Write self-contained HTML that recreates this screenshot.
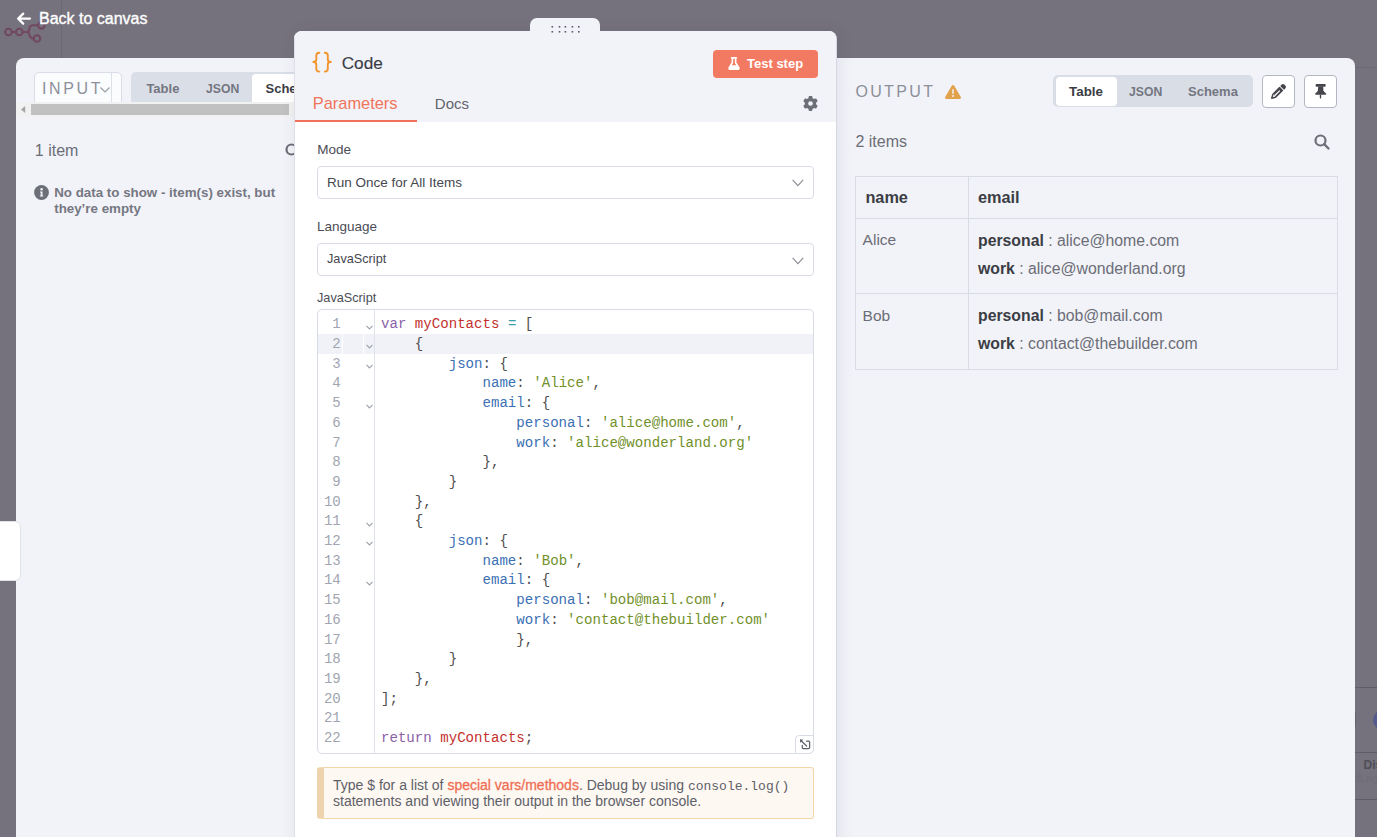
<!DOCTYPE html>
<html><head><meta charset="utf-8">
<style>
*{box-sizing:border-box;margin:0;padding:0}
html,body{width:1377px;height:837px;overflow:hidden}
body{background:#75727d;font-family:"Liberation Sans",sans-serif;position:relative;color:#555}
.a{position:absolute}
.t{position:absolute;white-space:pre;line-height:1}
.b{font-weight:700}
svg{position:absolute;overflow:visible}
/* panels */
#lp{left:16px;top:58px;width:290px;height:800px;background:#f2f3f8;border-radius:8px 0 0 0;overflow:hidden;z-index:1}
#rp{left:830px;top:58px;width:525px;height:800px;background:#f2f3f8;border-radius:0 8px 0 0;overflow:hidden;z-index:1}
#handle{left:530px;top:17.6px;width:70px;height:20px;background:#f2f3f8;border-radius:7px 7px 0 0;z-index:4}
#cp{left:294px;top:31px;width:543px;height:820px;background:#fff;border-radius:8px 8px 0 0;overflow:hidden;border-right:1px solid #d5d8e2;z-index:3;box-shadow:2px 0 16px rgba(60,60,100,.09)}
#cphead{left:0;top:0;width:543px;height:91px;background:#f2f3f8}
.code{font-family:"Liberation Mono",monospace;font-size:14.1px;line-height:19.7px;white-space:pre;color:#4e4e4e}
.kw{color:#8a5fa8}.vd{color:#c2302d}.op{color:#3a9fa8}.pr{color:#3b70b3}.st{color:#71902a}
.ln{font-family:"Liberation Mono",monospace;font-size:14px;line-height:19.7px;color:#a1a5b0;text-align:right;white-space:pre}
</style></head><body>

<!-- canvas background bits -->
<div class="a" style="left:61px;top:0;width:1px;height:58px;background:#6a6873"></div>
<svg style="left:0;top:0" width="60" height="50" viewBox="0 0 60 50">
  <g fill="none" stroke="#724860" stroke-width="2.1">
    <circle cx="8.5" cy="32" r="3.3"/><circle cx="19.3" cy="32" r="3.3"/>
    <circle cx="41.4" cy="25.3" r="3.3"/><circle cx="37" cy="38.5" r="3.3"/>
    <path d="M11.8 32H16M22.6 32H27.5C28.6 32 29 31 29.2 29.5C29.5 27 30.5 25.3 33 25.3H38.1M27.5 32C28.6 32 29 33 29.3 34.5C29.7 36.8 30.6 38.5 33.7 38.5"/>
  </g>
</svg>
<svg style="left:16px;top:12px" width="16" height="16" viewBox="0 0 16 16"><path d="M7.2 1.6L2.2 6.6L7.2 11.6M2.4 6.6H14" fill="none" stroke="#fff" stroke-width="2.3" stroke-linecap="round" stroke-linejoin="round"/></svg>
<div class="t" style="left:39px;top:10.5px;font-size:16px;color:#fff;-webkit-text-stroke:0.35px #fff">Back to canvas</div>

<!-- left white tab -->
<div class="a" style="left:-6px;top:521px;width:27px;height:60px;background:#fff;border:1px solid #dfe1e8;border-radius:6px;z-index:2"></div>

<!-- bottom-right canvas node remnants -->
<div class="a" style="left:1355px;top:58px;width:22px;height:779px;background-image:radial-gradient(circle at center,rgba(40,36,50,.06) 0,rgba(40,36,50,.04) 0.7px,transparent 1.1px);background-size:13.28px 13.28px;background-position:9.24px 5.08px"></div>
<div class="a" style="left:1355px;top:67px;width:22px;height:1px;background:#6c6974"></div>
<div class="a" style="left:1355px;top:687px;width:22px;height:1px;background:#5f5d68"></div>
<div class="a" style="left:1355px;top:752px;width:22px;height:1px;background:#5f5d68"></div>
<div class="a" style="left:1355px;top:799px;width:22px;height:1px;background:#5f5d68"></div>
<div class="a" style="left:1355px;top:712px;width:1px;height:15px;background:#65636e"></div>
<div class="a" style="left:1373px;top:709.5px;width:20px;height:20px;background:#555a8c;border-radius:50%"></div>
<div class="t b" style="left:1363.5px;top:759px;font-size:12px;color:#504d59">Dis</div>
<div class="t" style="left:1354px;top:772.5px;font-size:11px;color:#6e6c77">dLega</div>

<!-- LEFT PANEL -->
<div class="a" id="lp">
  <!-- INPUT select -->
  <div class="a" style="left:18px;top:14px;width:87.5px;height:40px;background:#fbfcfe;border:1px solid #d9dde6;border-radius:5px"></div>
  <div class="a" style="left:95px;top:15px;width:1px;height:40px;background:#dde1ea"></div>
  <div class="t" style="left:26px;top:22.9px;font-size:16px;letter-spacing:2.6px;color:#8e909a">INPUT</div>
  <svg style="left:84px;top:29px" width="10" height="6" viewBox="0 0 10 6"><path d="M0.5 0.5L5 5L9.5 0.5" fill="none" stroke="#9a9ca5" stroke-width="1.1"/></svg>
  <!-- segmented -->
  <div class="a" style="left:115px;top:14.3px;width:200px;height:40px;background:#dadee7;border-radius:5px"></div>
  <div class="a" style="left:236px;top:16.4px;width:80px;height:40px;background:#fff;border-radius:4px"></div>
  <div class="t b" style="left:130.4px;top:23.9px;font-size:13px;color:#747681">Table</div>
  <div class="t b" style="left:190px;top:24.6px;font-size:12.2px;color:#747681">JSON</div>
  <div class="t b" style="left:249.5px;top:23.9px;font-size:13px;color:#3b3d45">Schema</div>
  <!-- scrollbar -->
  <div class="a" style="left:0;top:44px;width:290px;height:14.5px;background:#f1f1f1"></div>
  <svg style="left:4.8px;top:47.9px" width="4.2" height="7" viewBox="0 0 4.2 7"><path d="M4.2 0V7L0 3.5Z" fill="#a3a3a3"/></svg>
  <div class="a" style="left:15px;top:46px;width:258px;height:11px;background:#c1c1c1"></div>
  <!-- 1 item -->
  <div class="t" style="left:18.8px;top:84.5px;font-size:16px;color:#6b6d77">1 item</div>
  <svg style="left:268.5px;top:85px" width="16" height="16" viewBox="0 0 16 16"><circle cx="6.5" cy="6.5" r="5" fill="none" stroke="#6c6e78" stroke-width="2.2"/><path d="M10.2 10.2L14.5 14.5" stroke="#6c6e78" stroke-width="2.4" stroke-linecap="round"/></svg>
  <!-- info -->
  <svg style="left:18.2px;top:127px" width="15" height="15" viewBox="0 0 15 15"><circle cx="7.5" cy="7.5" r="7.4" fill="#6c6e78"/><circle cx="7.6" cy="4.3" r="1.2" fill="#f2f3f8"/><path d="M6 6.6H8.5V10.6H9.3V11.6H5.9V10.6H6.7V7.6H6Z" fill="#f2f3f8"/></svg>
  <div class="t b" style="left:38.2px;top:127.7px;font-size:13.35px;color:#757782">No data to show - item(s) exist, but</div>
  <div class="t b" style="left:38.2px;top:143.7px;font-size:13.35px;color:#757782">they’re empty</div>
</div>

<!-- RIGHT PANEL -->
<div class="a" id="rp">
  <div class="t" style="left:25.4px;top:26.3px;font-size:16px;letter-spacing:2.35px;color:#8d8f99">OUTPUT</div>
  <svg style="left:115px;top:27px" width="16" height="14" viewBox="0 0 512 448"><path fill="#e2a14b" d="M256 0c14.2 0 27.3 7.5 34.5 19.8l216 368c7.3 12.4 7.3 27.7 .2 40.1S486.3 448 472 448H40c-14.3 0-27.6-7.7-34.7-20.1s-7-27.8 .2-40.1l216-368C228.7 7.5 241.8 0 256 0zm0 128c-13.3 0-24 10.7-24 24V264c0 13.3 10.7 24 24 24s24-10.7 24-24V152c0-13.3-10.7-24-24-24zm32 224a32 32 0 1 0 -64 0 32 32 0 1 0 64 0z"/></svg>
  <!-- segmented -->
  <div class="a" style="left:223px;top:17.3px;width:200px;height:32px;background:#d9dde6;border-radius:5px"></div>
  <div class="a" style="left:226px;top:19.2px;width:61px;height:28.5px;background:#fff;border-radius:4px"></div>
  <div class="t b" style="left:239px;top:26.6px;font-size:13.4px;color:#3b3d45">Table</div>
  <div class="t b" style="left:299px;top:27.6px;font-size:12.2px;color:#747681">JSON</div>
  <div class="t b" style="left:358px;top:26.6px;font-size:13px;color:#747681">Schema</div>
  <!-- buttons -->
  <div class="a" style="left:432.4px;top:17.3px;width:32.5px;height:32.5px;background:#fff;border:1px solid #b3b7c1;border-radius:4px"></div>
  <div class="a" style="left:474.3px;top:17.3px;width:32.5px;height:32.5px;background:#fff;border:1px solid #b3b7c1;border-radius:4px"></div>
  <svg style="left:441px;top:25.5px" width="15" height="15" viewBox="0 0 512 512"><path fill="#45464c" d="M410.3 231l11.3-11.3-33.9-33.9-62.1-62.1L291.7 89.8l-11.3 11.3-22.6 22.6L58.6 322.9c-10.4 10.4-18 23.3-22.2 37.4L1 480.7c-2.5 8.4-.2 17.5 6.1 23.7s15.3 8.5 23.7 6.1l120.3-35.4c14.1-4.2 27-11.8 37.4-22.2L387.7 253.7 410.3 231zM160 399.4l-9.1 22.7c-4 3.1-8.5 5.4-13.3 6.9L59.4 452l23-78.1c1.4-4.9 3.8-9.4 6.9-13.3l22.7-9.1v32c0 8.8 7.2 16 16 16h32zM362.7 18.7L348.3 33.2 325.7 55.8 314.3 67.1l33.9 33.9 62.1 62.1 33.9 33.9 11.3-11.3 22.6-22.6 14.5-14.5c25-25 25-65.5 0-90.5L453.3 18.7c-25-25-65.5-25-90.5 0z"/><path d="M140 385L290 235" stroke="#fff" stroke-width="42" stroke-linecap="round"/></svg>
  <svg style="left:484px;top:25px" width="14" height="17" viewBox="0 0 14 17"><g fill="#45464c"><path d="M2.3 1H10.9Q11.6 1 11.6 1.8V3Q11.6 3.8 10.9 3.8H2.4Q1.7 3.8 1.7 3V1.8Q1.7 1 2.3 1Z"/><path d="M4.2 3.5H9.1L9.5 8.2H3.8Z"/><path d="M3.8 8H9.5L12 10.5Q12.5 11.8 11.3 11.8H2Q0.8 11.8 1.3 10.5Z"/><path d="M5.8 11.6H7.2V14.9L6.5 15.8L5.8 14.9Z"/></g></svg>
  <!-- items -->
  <div class="t" style="left:25.4px;top:75.7px;font-size:16px;color:#6b6d77">2 items</div>
  <svg style="left:484.3px;top:75.5px" width="16" height="16" viewBox="0 0 16 16"><circle cx="6.5" cy="6.5" r="5" fill="none" stroke="#6c6e78" stroke-width="2.2"/><path d="M10.2 10.2L14.5 14.5" stroke="#6c6e78" stroke-width="2.4" stroke-linecap="round"/></svg>
  <!-- table -->
  <div class="a" style="left:25px;top:118px;width:483px;height:193.5px;border:1px solid #d8dce5"></div>
  <div class="a" style="left:138px;top:118px;width:1px;height:193.5px;background:#d8dce5"></div>
  <div class="a" style="left:25px;top:160px;width:483px;height:1px;background:#d8dce5"></div>
  <div class="a" style="left:25px;top:235px;width:483px;height:1px;background:#d8dce5"></div>
  <div class="t b" style="left:35.4px;top:131.2px;font-size:16.3px;color:#3b3d45">name</div>
  <div class="t b" style="left:148px;top:131.2px;font-size:16.3px;color:#3b3d45">email</div>
  <div class="t" style="left:32.6px;top:173.5px;font-size:15.5px;color:#6b6d77">Alice</div>
  <div class="t" style="left:148px;top:174.6px;font-size:15.8px;color:#6b6d77"><span class="b" style="color:#3b3d45">personal</span> : alice@home.com</div>
  <div class="t" style="left:148px;top:202.9px;font-size:15.8px;color:#6b6d77"><span class="b" style="color:#3b3d45">work</span> : alice@wonderland.org</div>
  <div class="t" style="left:32.6px;top:249.5px;font-size:15.5px;color:#6b6d77">Bob</div>
  <div class="t" style="left:148px;top:250.3px;font-size:15.8px;color:#6b6d77"><span class="b" style="color:#3b3d45">personal</span> : bob@mail.com</div>
  <div class="t" style="left:148px;top:278.3px;font-size:15.8px;color:#6b6d77"><span class="b" style="color:#3b3d45">work</span> : contact@thebuilder.com</div>
</div>

<!-- drag handle -->
<div class="a" id="handle">
  <svg style="left:21px;top:8px" width="30" height="7" viewBox="0 0 30 7">
    <g fill="#5b5d66">
      <rect x="0.5" y="0" width="1.6" height="1.6"/><rect x="7.7" y="0" width="1.6" height="1.6"/><rect x="13.6" y="0" width="1.6" height="1.6"/><rect x="20.6" y="0" width="1.6" height="1.6"/><rect x="27" y="0" width="1.6" height="1.6"/>
      <rect x="0.5" y="5" width="1.6" height="1.6"/><rect x="7.7" y="5" width="1.6" height="1.6"/><rect x="13.6" y="5" width="1.6" height="1.6"/><rect x="20.6" y="5" width="1.6" height="1.6"/><rect x="27" y="5" width="1.6" height="1.6"/>
    </g>
  </svg>
</div>

<!-- CENTER PANEL -->
<div class="a" id="cp">
  <div class="a" id="cphead"></div>
  <div class="a" style="left:0;top:0;width:1px;height:820px;background:#dde0e8;z-index:5"></div>
  <!-- braces icon -->
  <svg style="left:18px;top:21px" width="20" height="20" viewBox="0 0 20 20"><g fill="none" stroke="#f2952f" stroke-width="1.9" stroke-linecap="round" stroke-linejoin="round"><path d="M7.3 0.8C5.1 0.8 4.3 1.6 4.3 3.6V7.6C4.3 9 3.2 10 1.3 10C3.2 10 4.3 11 4.3 12.4V16.8C4.3 18.8 5.1 19.6 7.3 19.6"/><path d="M12.8 0.8C15 0.8 15.8 1.6 15.8 3.6V7.6C15.8 9 16.9 10 18.8 10C16.9 10 15.8 11 15.8 12.4V16.8C15.8 18.8 15 19.6 12.8 19.6"/></g></svg>
  <div class="t" style="left:47.7px;top:24.2px;font-size:17.2px;color:#3b3d45;-webkit-text-stroke:0.15px #3b3d45">Code</div>
  <!-- test step -->
  <div class="a" style="left:419px;top:19px;width:105px;height:28px;background:#f37a62;border-radius:4px"></div>
  <svg style="left:434px;top:26px" width="12" height="13" viewBox="0 0 448 512"><path fill="#fff" d="M288 0H160 128C110.3 0 96 14.3 96 32s14.3 32 32 32V196.8c0 11.8-3.3 23.5-9.5 33.5L10.3 406.2C3.6 417.2 0 429.7 0 442.6C0 480.9 31.1 512 69.4 512H378.6c38.3 0 69.4-31.1 69.4-69.4c0-12.8-3.6-25.4-10.3-36.4L329.5 230.4c-6.2-10.1-9.5-21.7-9.5-33.5V64c17.7 0 32-14.3 32-32s-14.3-32-32-32H288zM192 196.8V64h64V196.8c0 23.7 6.6 46.9 19 67.1L309.5 320h-171L173 263.9c12.4-20.2 19-43.4 19-67.1z"/></svg>
  <div class="t b" style="left:453px;top:26.2px;font-size:13px;color:#fff">Test step</div>
  <!-- tabs -->
  <div class="t" style="left:18.8px;top:63.5px;font-size:16.4px;color:#f0735b">Parameters</div>
  <div class="t" style="left:140.8px;top:64.7px;font-size:15px;color:#62646e">Docs</div>
  <div class="a" style="left:0;top:89px;width:123px;height:2px;background:#f0705a"></div>
  <svg style="left:509px;top:65px" width="15" height="15" viewBox="0 0 512 512"><path fill="#6c6e78" d="M495.9 166.6c3.2 8.7 .5 18.4-6.4 24.6l-43.3 39.4c1.1 8.3 1.7 16.8 1.7 25.4s-.6 17.1-1.7 25.4l43.3 39.4c6.9 6.2 9.6 15.9 6.4 24.6c-4.4 11.9-9.7 23.3-15.8 34.3l-4.7 8.1c-6.6 11-14 21.4-22.1 31.2c-5.9 7.2-15.7 9.6-24.5 6.8l-55.7-17.7c-13.4 10.3-28.2 18.9-44 25.4l-12.5 57.1c-2 9.1-9 16.3-18.2 17.8c-13.8 2.3-28 3.5-42.5 3.5s-28.7-1.2-42.5-3.5c-9.2-1.5-16.2-8.7-18.2-17.8l-12.5-57.1c-15.8-6.5-30.6-15.1-44-25.4L83.1 425.9c-8.8 2.8-18.6 .3-24.5-6.8c-8.1-9.8-15.5-20.2-22.1-31.2l-4.7-8.1c-6.1-11-11.4-22.4-15.8-34.3c-3.2-8.7-.5-18.4 6.4-24.6l43.3-39.4C64.6 273.1 64 264.6 64 256s.6-17.1 1.7-25.4L22.4 191.2c-6.9-6.2-9.6-15.9-6.4-24.6c4.4-11.9 9.7-23.3 15.8-34.3l4.7-8.1c6.6-11 14-21.4 22.1-31.2c5.9-7.2 15.7-9.6 24.5-6.8l55.7 17.7c13.4-10.3 28.2-18.9 44-25.4l12.5-57.1c2-9.1 9-16.3 18.2-17.8C227.3 1.2 241.5 0 256 0s28.7 1.2 42.5 3.5c9.2 1.5 16.2 8.7 18.2 17.8l12.5 57.1c15.8 6.5 30.6 15.1 44 25.4l55.7-17.7c8.8-2.8 18.6-.3 24.5 6.8c8.1 9.8 15.5 20.2 22.1 31.2l4.7 8.1c6.1 11 11.4 22.4 15.8 34.3zM256 336a80 80 0 1 0 0-160 80 80 0 1 0 0 160z"/></svg>

  <!-- Mode -->
  <div class="t" style="left:23.2px;top:111.8px;font-size:13.5px;color:#4b4d56">Mode</div>
  <div class="a" style="left:23px;top:135px;width:497px;height:33px;border:1px solid #d8dce6;border-radius:4px"></div>
  <div class="t" style="left:33px;top:144.7px;font-size:13.5px;color:#45474f">Run Once for All Items</div>
  <svg style="left:497.6px;top:148px" width="12" height="8" viewBox="0 0 12 8"><path d="M0.6 0.8L5.9 6.6L11.2 0.8" fill="none" stroke="#8a8c95" stroke-width="1.1"/></svg>
  <!-- Language -->
  <div class="t" style="left:23px;top:188.8px;font-size:13.5px;color:#4b4d56">Language</div>
  <div class="a" style="left:23px;top:212px;width:497px;height:33px;border:1px solid #d8dce6;border-radius:4px"></div>
  <div class="t" style="left:33px;top:222.3px;font-size:12.7px;color:#45474f">JavaScript</div>
  <svg style="left:497.6px;top:225.5px" width="12" height="8" viewBox="0 0 12 8"><path d="M0.6 0.8L5.9 6.6L11.2 0.8" fill="none" stroke="#8a8c95" stroke-width="1.1"/></svg>
  <!-- JavaScript label -->
  <div class="t" style="left:23px;top:260.8px;font-size:12.7px;color:#4b4d56">JavaScript</div>

  <!-- editor -->
  <div class="a" style="left:23px;top:278.3px;width:496.5px;height:445px;border:1px solid #d8dce6;border-radius:5px;overflow:hidden">
    <!-- active line -->
    <div class="a" style="left:0;top:24px;width:497px;height:19.7px;background:#f1f2f7"></div>
    <div class="a" style="left:24.2px;top:24px;width:1px;height:19.7px;background:#fff"></div>
    <div class="a" style="left:44.7px;top:24px;width:1px;height:19.7px;background:#fff"></div>
    <!-- gutter border -->
    <div class="a" style="left:55.8px;top:0;width:1px;height:445px;background:#dfe2ea"></div>
    <div class="a ln" style="left:0;top:5px;width:22.7px">1
2
3
4
5
6
7
8
9
10
11
12
13
14
15
16
17
18
19
20
21
22</div>
    <!-- fold markers -->
    <svg style="left:48px;top:14.5px" width="7" height="5" viewBox="0 0 7 5"><path d="M0.5 0.8L3.5 4L6.5 0.8" fill="none" stroke="#9da1ab" stroke-width="1.1"/></svg>
    <svg style="left:48px;top:34.2px" width="7" height="5" viewBox="0 0 7 5"><path d="M0.5 0.8L3.5 4L6.5 0.8" fill="none" stroke="#9da1ab" stroke-width="1.1"/></svg>
    <svg style="left:48px;top:53.9px" width="7" height="5" viewBox="0 0 7 5"><path d="M0.5 0.8L3.5 4L6.5 0.8" fill="none" stroke="#9da1ab" stroke-width="1.1"/></svg>
    <svg style="left:48px;top:93.3px" width="7" height="5" viewBox="0 0 7 5"><path d="M0.5 0.8L3.5 4L6.5 0.8" fill="none" stroke="#9da1ab" stroke-width="1.1"/></svg>
    <svg style="left:48px;top:211.5px" width="7" height="5" viewBox="0 0 7 5"><path d="M0.5 0.8L3.5 4L6.5 0.8" fill="none" stroke="#9da1ab" stroke-width="1.1"/></svg>
    <svg style="left:48px;top:231.2px" width="7" height="5" viewBox="0 0 7 5"><path d="M0.5 0.8L3.5 4L6.5 0.8" fill="none" stroke="#9da1ab" stroke-width="1.1"/></svg>
    <svg style="left:48px;top:270.6px" width="7" height="5" viewBox="0 0 7 5"><path d="M0.5 0.8L3.5 4L6.5 0.8" fill="none" stroke="#9da1ab" stroke-width="1.1"/></svg>
    <div class="a code" style="left:63px;top:5px"><span class="kw">var</span> <span class="vd">myContacts</span> <span class="op">=</span> [
    {
        <span class="pr">json</span>: {
            <span class="pr">name</span>: <span class="st">'Alice'</span>,
            <span class="pr">email</span>: {
                <span class="pr">personal</span>: <span class="st">'alice@home.com'</span>,
                <span class="pr">work</span>: <span class="st">'alice@wonderland.org'</span>
            },
        }
    },
    {
        <span class="pr">json</span>: {
            <span class="pr">name</span>: <span class="st">'Bob'</span>,
            <span class="pr">email</span>: {
                <span class="pr">personal</span>: <span class="st">'bob@mail.com'</span>,
                <span class="pr">work</span>: <span class="st">'contact@thebuilder.com'</span>
                },
        }
    },
];

<span class="kw">return</span> <span class="vd">myContacts</span>;</div>
    <!-- resize handle -->
  </div>

  <!-- resize handle -->
  <div class="a" style="left:501px;top:704px;width:18.5px;height:19.3px;background:#fff;border:1px solid #d8dce6;border-radius:4px 0 5px 0"></div>
  <svg style="left:500.6px;top:704px" width="19" height="19" viewBox="0 0 19 19"><g fill="none" stroke="#5f626b" stroke-width="1.25" stroke-linecap="round" stroke-linejoin="round"><path d="M5.6 5.2L11.6 11"/><path d="M7.3 10.3V12.6Q7.3 13.6 8.3 13.6H13.6Q14.6 13.6 14.6 12.6V7.2Q14.6 6.2 13.6 6.2H11.6"/></g><path d="M5 4.4H8.4L5.1 7.7Z" fill="#5f626b"/></svg>
  <!-- notice -->
  <div class="a" style="left:23px;top:736.3px;width:496.5px;height:51.5px;background:#fdf8f1;border:1px solid #f2d6a9;border-left:7px solid #eed4ae;border-radius:3px"></div>
  <div class="t" style="left:39px;top:747.2px;font-size:14px;color:#5e6069">Type $ for a list of <span style="color:#ef6f55;-webkit-text-stroke:0.3px #ef6f55">special vars/methods</span>. Debug by using <span style="font-family:'Liberation Mono',monospace;font-size:13px">console.log()</span></div>
  <div class="t" style="left:39px;top:763px;font-size:14px;color:#5e6069">statements and viewing their output in the browser console.</div>
</div>

</body></html>
